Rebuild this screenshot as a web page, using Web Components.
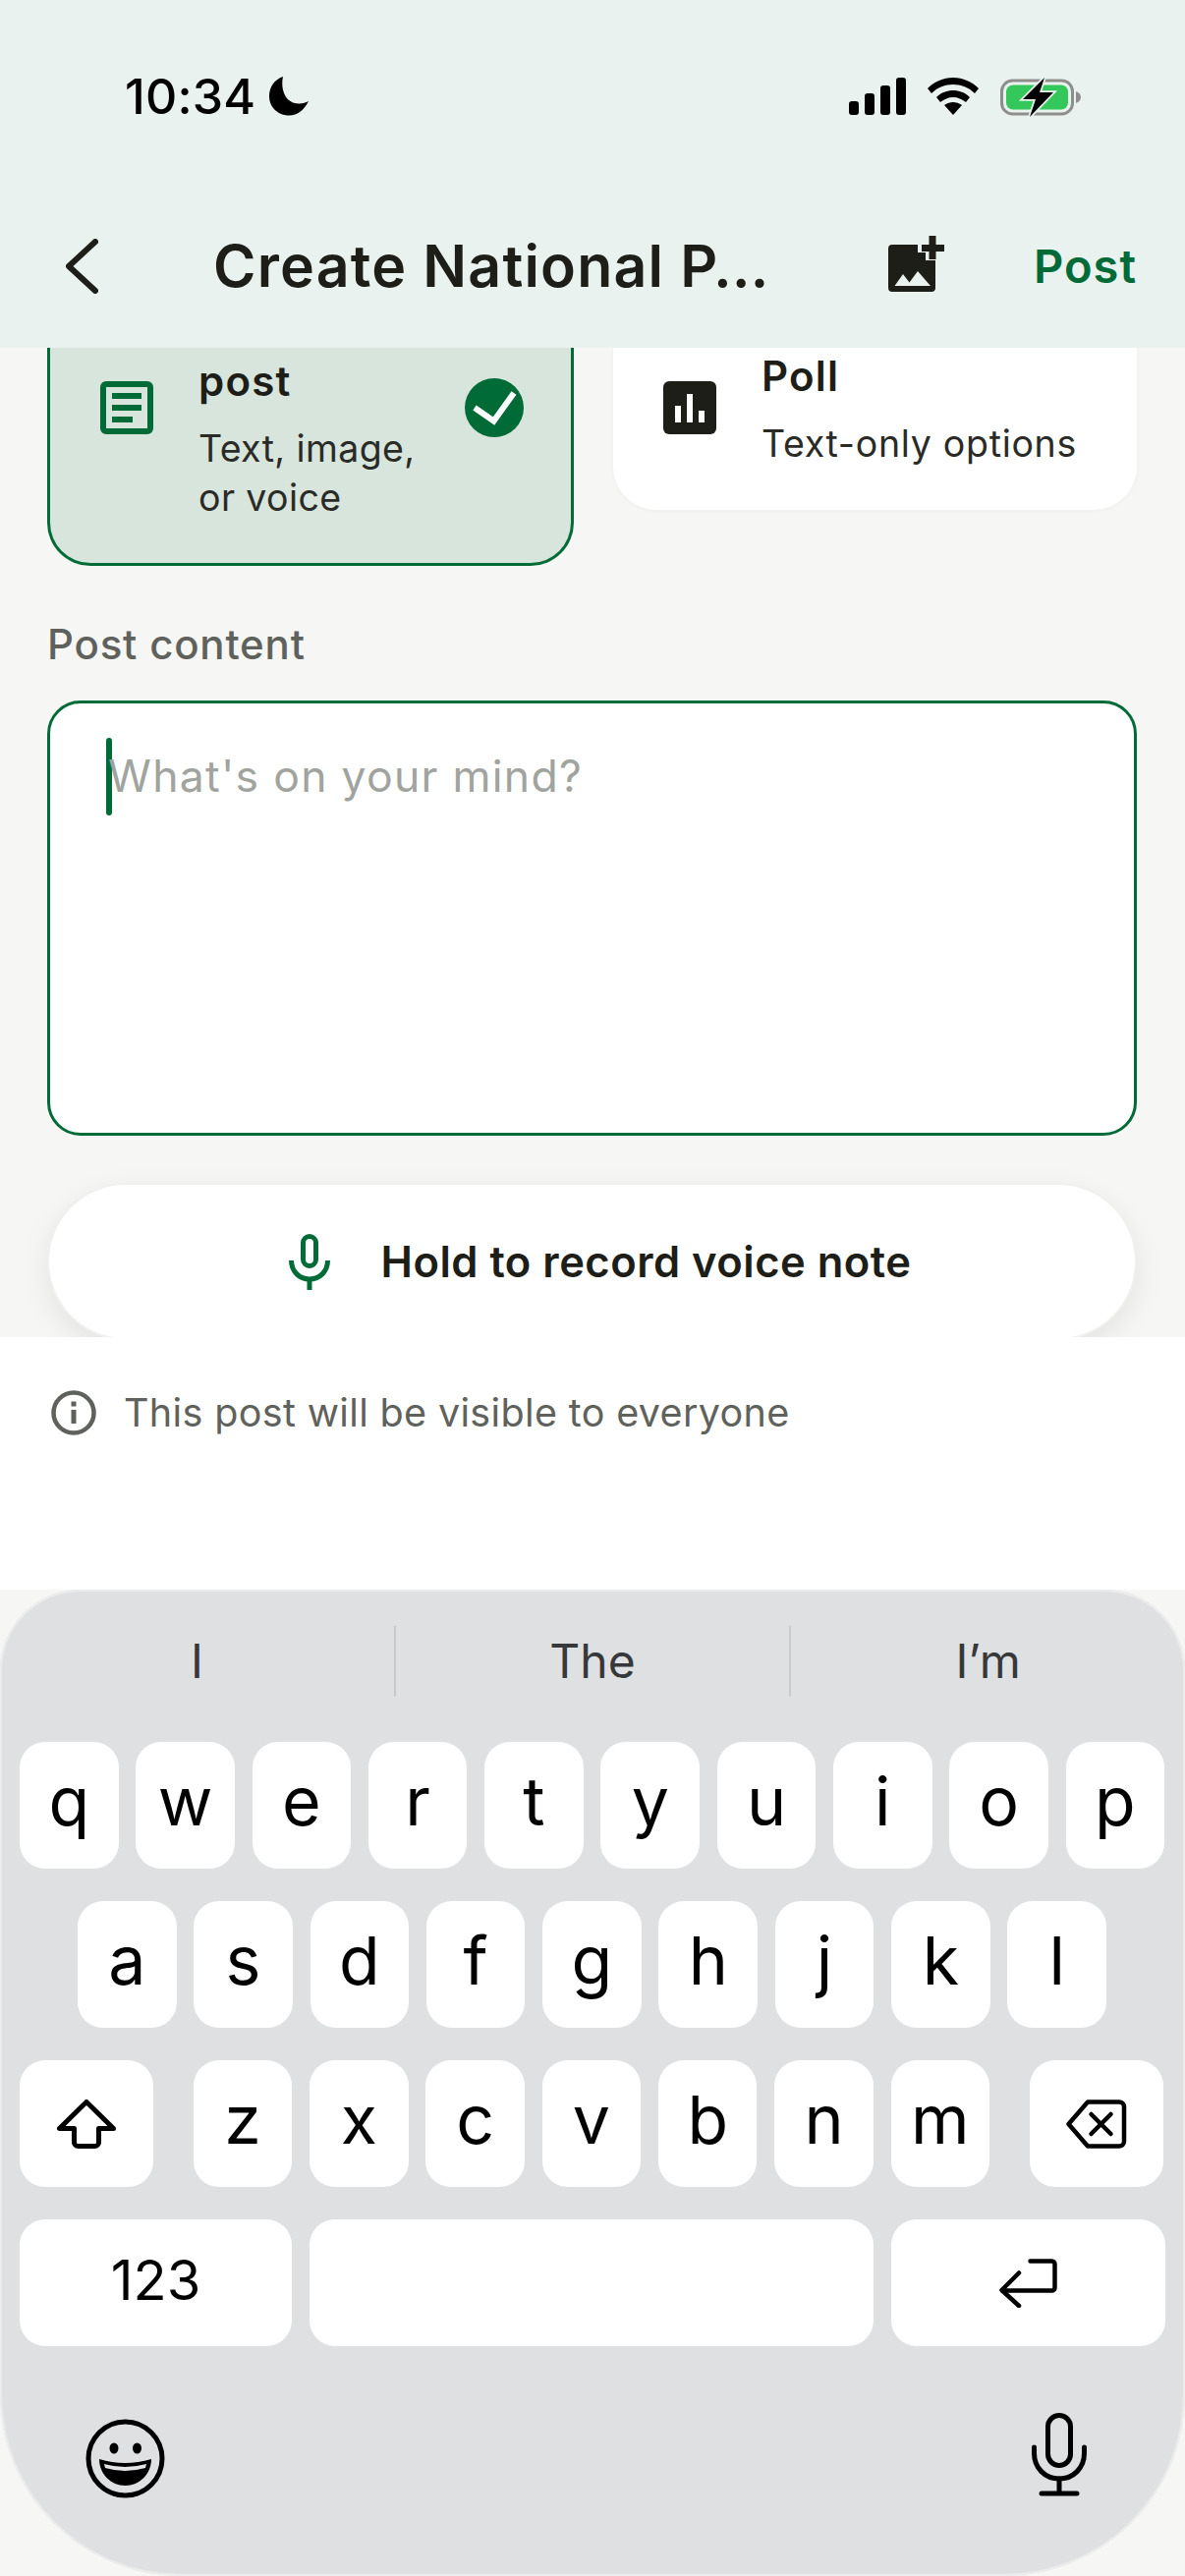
<!DOCTYPE html>
<html>
<head>
<meta charset="utf-8">
<title>Create National Post</title>
<style>
  html, body { margin: 0; padding: 0; background: #f6f6f4; }
  body { width: 1206px; height: 2622px; overflow: hidden; font-family: Inter, "Liberation Sans", sans-serif; color: #1d1e18; }
</style>
</head>
<body>

<template id="status-bar-template">
  <style>
    :host { display: flex; align-items: flex-start; justify-content: space-between; height: 200px; box-sizing: border-box; padding: 71px 106px 0 127px; }
    .left { display: flex; align-items: center; gap: 14px; height: 54px; font: 500 50px/54px Inter, sans-serif; color: #000; letter-spacing: 0.2px; }
    .right { display: flex; align-items: flex-start; gap: 22px; padding-top: 8px; }
    svg { display: block; }
  </style>
  <div class="left"><span>10:34</span>
    <svg width="40" height="40" viewBox="0 0 40 40"><path fill="#000" d="M14 0C5 3 0 11 0 20c0 11 9 19.500 20 19.500 9 0 16-6 20-14.500-5 3-14 4-20-1C14 19 12 9 14 0z"/></svg>
  </div>
  <div class="right">
    <svg width="58" height="38" viewBox="0 0 58 38" fill="#000"><rect x="0" y="24" width="10" height="14" rx="3"/><rect x="16" y="16" width="10" height="22" rx="3"/><rect x="32" y="8" width="10" height="30" rx="3"/><rect x="48" y="0" width="10" height="38" rx="3"/></svg>
    <svg width="52" height="38" viewBox="0 0 52 38" fill="#000"><path d="M0 11C7 4 16 0 26 0s19 4 26 11l-4 5c-6-6-14-9-22-9S10 10 4 16z"/><path d="M9 20c5-5 11-7 17-7s12 2 17 7l-4 5c-4-3-8-5-13-5s-9 2-13 5z"/><path d="M17 28c3-2 6-3 9-3s6 1 9 3L26 38z"/></svg>
    <svg width="82" height="40" viewBox="0 0 82 40"><rect x="1.500" y="3" width="72" height="34" rx="11" fill="none" stroke="#8e8e8c" stroke-width="3"/><path d="M77 14c3 1 5 3 5 6s-2 5-5 6z" fill="#8e8e8c"/><rect x="6" y="7.500" width="63" height="25" rx="7" fill="#34c759"/><path d="M45 0 23 22h13l-6 18 24-25H40z" fill="#000" stroke="#eaf2ef" stroke-width="3.500" paint-order="stroke"/></svg>
  </div>
</template>

<template id="app-header-template">
  <style>
    :host { display: flex; align-items: center; height: 154px; box-sizing: border-box; padding: 0 49px 12px 67px; }
    .back { display: block; margin-right: 117px; flex: none; }
    .title { font: 600 59px/70px Inter, sans-serif; letter-spacing: 1.2px; color: #1d1e18; white-space: nowrap; flex: 1; }
    .pic { display: block; flex: none; margin: -5px 90px 0 0; }
    .post { font: 600 47px/60px Inter, sans-serif; letter-spacing: 1px; color: #006b37; flex: none; }
  </style>
  <svg class="back" width="33" height="56" viewBox="0 0 33 56"><path d="M30 3 3 28l27 25" fill="none" stroke="#1d1e18" stroke-width="6" stroke-linecap="round" stroke-linejoin="round"/></svg>
  <div class="title">Create National P…</div>
  <svg class="pic" width="58" height="57" viewBox="0 0 58 57"><path fill="#1d1e18" d="M4 9h26v8h8v8h10v28a4 4 0 0 1-4 4H4a4 4 0 0 1-4-4V13a4 4 0 0 1 4-4z"/><path fill="#1d1e18" d="M41.500 0h7v9H57v7h-8.500v8h-7v-8H34V9h7.500z"/><path fill="#eaf2ef" d="M6.500 51 15 39l6.500 8.500L30 36l13 15z"/></svg>
  <div class="post">Post</div>
</template>

<template id="type-card-template">
  <style>
    :host { display: flex; flex: none; box-sizing: border-box; width: var(--w); height: var(--h); border-radius: 0 0 44px 44px; background: var(--bg, #fff); border: var(--bd, 0 solid transparent); padding: var(--top) 0 0 var(--left); }
    .icon { flex: none; width: 54px; height: 54px; margin-top: var(--icon-top); margin-right: 46px; }
    .text { flex: 1; }
    .check { flex: none; margin: var(--check-top, 0) 48px 0 0; }
    ::slotted([slot=title]) { display: block; font: 600 42px/48px Inter, sans-serif; letter-spacing: 1.2px; color: #1d1e18; }
    ::slotted([slot=sub]) { display: block; margin-top: var(--sub-gap); font: 400 37.500px/50px Inter, sans-serif; letter-spacing: var(--sub-ls, 0.7px); color: #2a2b26; }
  </style>
  <div class="icon"><slot name="icon"></slot></div>
  <div class="text"><slot name="title"></slot><slot name="sub"></slot></div>
  <div class="check"><slot name="check"></slot></div>
</template>

<template id="content-box-template">
  <style>
    :host { display: block; box-sizing: border-box; height: 443px; background: #fff; border: 3px solid #006b37; border-radius: 34px; padding: 35px 0 0 57px; }
    .line { display: flex; align-items: flex-start; }
    .caret { flex: none; width: 6px; height: 79px; border-radius: 3px; background: #006b37; }
    .ph { margin: 4px 0 0 -4px; font: 400 44.500px/70px Inter, sans-serif; letter-spacing: 1.3px; color: #a0a39e; white-space: nowrap; }
  </style>
  <div class="line"><div class="caret"></div><div class="ph"><slot></slot></div></div>
</template>

<template id="voice-button-template">
  <style>
    :host { display: flex; align-items: center; justify-content: center; gap: 52px; box-sizing: border-box; height: 160px; background: #fff; border-radius: 80px; border: 2px solid #f0f0ee; box-shadow: 0 10px 30px rgba(0,0,0,.08); padding-left: 16px; font: 600 43.500px/60px Inter, sans-serif; letter-spacing: 0.5px; color: #1d1e18; }
    svg { display: block; flex: none; }
  </style>
  <svg width="42" height="57" viewBox="0 0 42 57" fill="none" stroke="#006b37" stroke-width="5"><rect x="14.500" y="2.500" width="13" height="30" rx="6.500"/><path d="M2.500 27c0 11 8 19 18.500 19s18.500-8 18.500-19"/><path d="M21 46v11"/></svg>
  <slot></slot>
</template>

<template id="info-note-template">
  <style>
    :host { display: flex; align-items: center; gap: 28px; font: 400 39.500px/50px Inter, sans-serif; letter-spacing: 0.35px; color: #5f625c; }
    svg { display: block; flex: none; }
  </style>
  <svg width="46" height="46" viewBox="0 0 46 46" fill="none"><circle cx="23" cy="23" r="20.500" stroke="#5f625c" stroke-width="4.500"/><rect x="20.500" y="20" width="5" height="14" fill="#5f625c"/><rect x="20.500" y="11.500" width="5" height="5" fill="#5f625c"/></svg>
  <slot></slot>
</template>

<template id="kbd-key-template">
  <style>
    :host { display: flex; justify-content: center; align-items: center; flex: none; box-sizing: border-box; width: var(--w, 100.500px); height: 129px; border-radius: 26px; background: #fff; color: #000; font: 400 68px/80px Inter, "Liberation Sans", sans-serif; padding-bottom: var(--pb, 10px); }
    ::slotted(svg) { margin-top: 10px; }
  </style>
  <slot></slot>
</template>

<template id="ios-keyboard-template">
  <style>
    :host { display: block; box-sizing: border-box; height: 1004px; background: #dfe0e2; border-radius: 82px 82px 185px 185px; box-shadow: inset 0 0 0 2px #ececed; padding-top: 37px; }
    .suggest { display: flex; height: 72px; align-items: center; margin-bottom: 46px; }
    .suggest span { flex: 1; display: block; height: 72px; text-align: center; font: 400 48px/72px Inter, sans-serif; color: #37383a; }
    .suggest span + span { border-left: 2px solid #c9cacc; }
    .row { display: flex; gap: 17.800px; height: 129px; margin-bottom: 33px; padding: 0 20px; }
    .row.home { padding-left: 79px; }
    .row.shift > :first-child { margin-right: 23px; }
    .row.shift > :last-child { margin-left: 23px; }
    .bottom { display: flex; justify-content: space-between; align-items: flex-start; padding: 41px 100px 0 87px; }
    .bottom svg:last-child { margin-top: -6px; }
    svg { display: block; }
  </style>
  <div class="suggest"><span>I</span><span>The</span><span>I’m</span></div>
  <div class="row" id="r1"></div>
  <div class="row home" id="r2"></div>
  <div class="row shift" id="r3">
    <kbd-key style="--w:136px"><svg width="60" height="50" viewBox="0 0 60 50" fill="none" stroke="#000" stroke-width="5" stroke-linejoin="round"><path d="M30 2.500 2.500 29.500H17.500v14a4 4 0 0 0 4 4h17a4 4 0 0 0 4-4v-14H57.500z"/></svg></kbd-key>
    <kbd-key style="--w:136px"><svg width="62" height="50" viewBox="0 0 62 50" fill="none" stroke="#000" stroke-width="4.500" stroke-linejoin="round" stroke-linecap="round"><path d="M22 2.500h32a5 5 0 0 1 5 5v35a5 5 0 0 1-5 5H22L2.500 25z"/><path d="M25.500 15l20 20M45.500 15l-20 20"/></svg></kbd-key>
  </div>
  <div class="row">
    <kbd-key style="--w:277px;font-size:56px;--pb:6px">123</kbd-key>
    <kbd-key style="--w:574px"></kbd-key>
    <kbd-key style="--w:279px"><svg width="59" height="50" viewBox="0 0 59 50" fill="none" stroke="#000" stroke-width="4.500" stroke-linecap="round" stroke-linejoin="round"><path d="M31.500 2.500h22a3 3 0 0 1 3 3v24a3 3 0 0 1-3 3H3"/><path d="M20 14.500 2.500 32 20 48"/></svg></kbd-key>
  </div>
  <div class="bottom">
    <svg width="81" height="81" viewBox="0 0 81 81"><circle cx="40.500" cy="40.500" r="37.500" fill="none" stroke="#000" stroke-width="5"/><ellipse cx="29" cy="30" rx="4.500" ry="5.500"/><ellipse cx="52.500" cy="30" rx="4.500" ry="5.500"/><path d="M14 41Q40 49 67 41C67 56 55 68 40.500 68S14 56 14 41z"/><path d="M19 46Q40 52 62 46L61 50Q40 56 20 50z" fill="#e4e5e7"/></svg>
    <svg width="56" height="85" viewBox="0 0 56 85" fill="none" stroke="#000" stroke-width="5" stroke-linecap="round"><rect x="16.500" y="2.500" width="23" height="51" rx="11.500"/><path d="M2.500 35v6c0 15 11 26 25.500 26s25.500-11 25.500-26v-6"/><path d="M28 67v15M10 82h36"/></svg>
  </div>
</template>

<status-bar style="background:#eaf2ef"></status-bar>
<app-header style="background:#eaf2ef"></app-header>

<div style="height:1007px;overflow:hidden;background:#f6f6f4;box-sizing:border-box;padding:0 49px 0 48px">
  <div style="display:flex;gap:40px;align-items:flex-start">
    <type-card style="--w:536px;--h:222px;--bg:#d8e5dd;--bd:3px solid #006b37;border-top:0;--left:51px;--top:10px;--icon-top:24px;--sub-gap:20px;--sub-ls:.4px">
      <svg slot="icon" width="54" height="54" viewBox="0 0 54 54" style="display:block"><rect x="3" y="3" width="48" height="48" rx="3" fill="none" stroke="#006b37" stroke-width="6"/><rect x="12" y="12" width="30" height="6" fill="#006b37"/><rect x="12" y="24" width="30" height="6" fill="#006b37"/><rect x="12" y="36" width="21" height="6" fill="#006b37"/></svg>
      <span slot="title">post</span>
      <span slot="sub">Text, image,<br>or voice</span>
      <svg slot="check" width="60" height="60" viewBox="0 0 60 60" style="display:block;margin-top:21px"><circle cx="30" cy="30" r="30" fill="#006b37"/><path d="M10 30l19.500 13.500L50 15" fill="none" stroke="#fff" stroke-width="6"/></svg>
    </type-card>
    <type-card style="--w:533px;--h:165px;--left:51px;--top:5px;--icon-top:29px;--sub-gap:20px;box-shadow:0 1px 4px rgba(0,0,0,.04)">
      <svg slot="icon" width="54" height="54" viewBox="0 0 54 54" style="display:block"><rect width="54" height="54" rx="6" fill="#1d1e18"/><rect x="12" y="25" width="6" height="17" fill="#fff"/><rect x="24" y="13" width="6" height="29" fill="#fff"/><rect x="36" y="30" width="6" height="12" fill="#fff"/></svg>
      <span slot="title">Poll</span>
      <span slot="sub" style="white-space:nowrap">Text-only options</span>
    </type-card>
  </div>
  <div style="margin:54px 0 31px;font:500 42px/52px Inter,sans-serif;letter-spacing:.8px;color:#5f625c">Post content</div>
  <content-box>What's on your mind?</content-box>
  <voice-button style="margin-top:48px">Hold to record voice note</voice-button>
</div>

<div style="height:257px;box-sizing:border-box;background:#fff;padding:52px 49px 0 52px">
  <info-note>This post will be visible to everyone</info-note>
</div>

<ios-keyboard></ios-keyboard>

<script>
  function register(tag, setup) {
    const template = document.getElementById(tag + "-template");
    customElements.define(
      tag,
      class extends HTMLElement {
        constructor() {
          super();
          this.attachShadow({ mode: "open" });
          this.shadowRoot.appendChild(template.content.cloneNode(true));
        }
        connectedCallback() {
          if (setup) setup(this.shadowRoot);
        }
      }
    );
  }

  function addKeys(root, id, letters, before) {
    const row = root.getElementById(id);
    const anchor = before ? row.lastElementChild : null;
    for (const letter of letters) {
      const key = document.createElement("kbd-key");
      key.textContent = letter;
      row.insertBefore(key, anchor);
    }
  }

  register("kbd-key");
  register("status-bar");
  register("app-header");
  register("type-card");
  register("content-box");
  register("voice-button");
  register("info-note");
  register("ios-keyboard", (root) => {
    addKeys(root, "r1", "qwertyuiop");
    addKeys(root, "r2", "asdfghjkl");
    addKeys(root, "r3", "zxcvbnm", true);
  });
</script>
</body>
</html>
